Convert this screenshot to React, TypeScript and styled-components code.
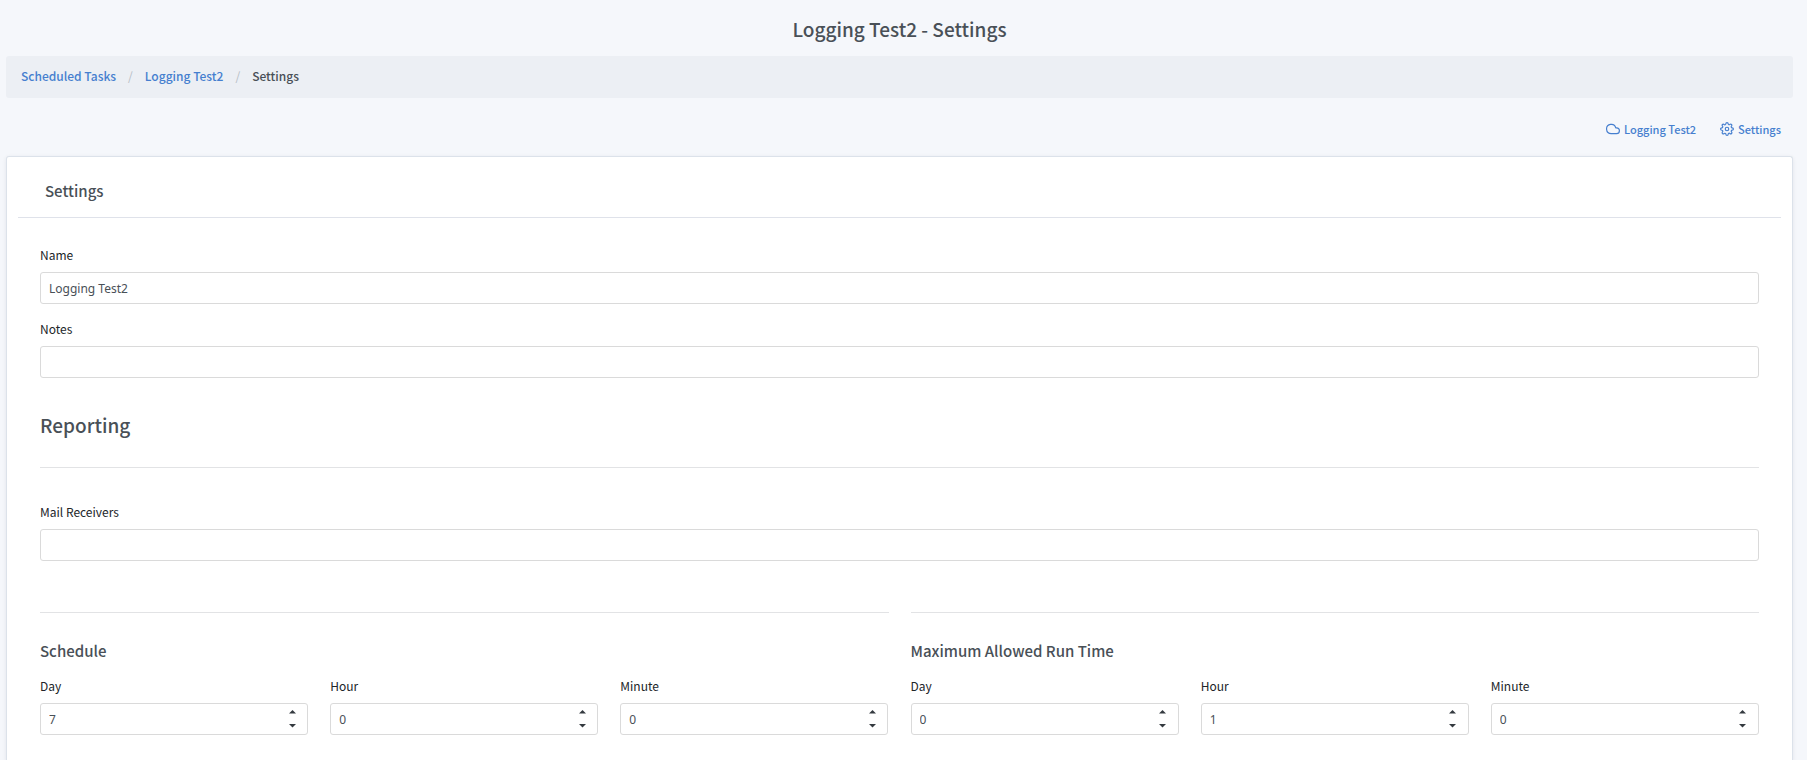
import React, { useState } from "react";
import styled, { createGlobalStyle } from "styled-components";
import { FiCloud, FiSettings } from "react-icons/fi";

const GlobalStyle = createGlobalStyle`
  * { box-sizing: border-box; }
  body {
    margin: 0;
    min-height: 100vh;
    background: #f5f7fb;
    color: #212529;
    font-family: "Noto Sans CJK SC", "Noto Sans", sans-serif;
    font-size: 12px;
    line-height: 20px;
  }
`;

const Page = styled.div`
  padding: 0 14px 0 6px;
`;

const PageTitle = styled.h1`
  margin: 0;
  padding: 15px 0 13px;
  color: #495057;
  font-size: 19px;
  font-weight: 500;
  line-height: 28px;
  text-align: center;
`;

const Breadcrumb = styled.ol`
  display: flex;
  margin: 0;
  padding: 10px 15px 12px;
  list-style: none;
  background: #eceff4;
  border-radius: 3px;
  font-weight: 500;
`;

const Crumb = styled.li`
  color: #495057;
  & + &::before {
    content: "/";
    padding: 0 12px;
    color: #b6bdc5;
    font-weight: 400;
  }
`;

const Link = styled.a`
  color: #467fcf;
  text-decoration: none;
`;

const Actions = styled.nav`
  display: flex;
  justify-content: flex-end;
  gap: 24px;
  padding: 21px 12px 17px 0;
`;

const ActionLink = styled(Link)`
  display: flex;
  align-items: center;
  gap: 4px;
  font-size: 11px;
  font-weight: 500;
`;

const Card = styled.section`
  min-height: calc(100vh - 156px);
  padding: 0 11px;
  background: #fff;
  border: 1px solid #dce2ea;
  border-bottom: 0;
  border-radius: 3px 3px 0 0;
  box-shadow: 0 1px 4px rgba(0, 20, 50, 0.08);
`;

const CardHeader = styled.header`
  padding: 24px 27px 16px;
  border-bottom: 1px solid #dfe2ea;
`;

const CardTitle = styled.h2`
  margin: 0;
  color: #495057;
  font-size: 15px;
  font-weight: 500;
  line-height: 20px;
`;

const Form = styled.form`
  display: flex;
  flex-direction: column;
  gap: 15px;
  padding: 27px 22px;
`;

const Field = styled.div`
  display: flex;
  flex-direction: column;
  gap: 7px;
`;

const Label = styled.label`
  color: #212529;
  font-size: 12px;
  font-weight: 400;
  line-height: 20px;
`;

const TextInput = styled.input`
  width: 100%;
  height: 32px;
  padding: 0 8px;
  background: #fff;
  color: #495057;
  border: 1px solid #dadada;
  border-radius: 3px;
  font-family: "Noto Sans", sans-serif;
  font-size: 12px;
`;

const Section = styled.div`
  padding-bottom: 36px;
`;

const SectionTitle = styled.h2`
  margin: 0 0 34px;
  padding: 18px 0 28px;
  border-bottom: 1px solid #e2e3e5;
  color: #495057;
  font-size: 19px;
  font-weight: 500;
  line-height: 28px;
`;

const Columns = styled.div`
  display: grid;
  grid-template-columns: 1fr 1fr;
  gap: 22px;
`;

const Group = styled.fieldset`
  min-width: 0;
  margin: 0;
  padding: 0;
  border: 0;
  border-top: 1px solid #e2e3e5;
`;

const GroupTitle = styled.h3`
  margin: 28px 0 15px;
  color: #495057;
  font-size: 15px;
  font-weight: 500;
  line-height: 20px;
`;

const Trio = styled.div`
  display: grid;
  grid-template-columns: repeat(3, 1fr);
  gap: 22px;
`;

const NumberBox = styled.div`
  display: flex;
  height: 32px;
  padding: 0 10px 0 8px;
  background: #fff;
  border: 1px solid #dadada;
  border-radius: 3px;
`;

const NumberInput = styled.input`
  flex: 1;
  min-width: 0;
  padding: 0;
  border: 0;
  outline: 0;
  background: none;
  color: #495057;
  font-family: "Noto Sans", sans-serif;
  font-size: 12px;
  appearance: textfield;
  &::-webkit-inner-spin-button { appearance: none; margin: 0; }
`;

const Steps = styled.div`
  display: flex;
  flex-direction: column;
  justify-content: center;
`;

const StepButton = styled.button`
  display: flex;
  align-items: center;
  justify-content: center;
  width: 10px;
  height: 14px;
  padding: 0;
  border: 0;
  background: none;
  color: #343a40;
`;

function NumberField({ id, label, initial }: { id: string; label: string; initial: number }) {
  const [value, setValue] = useState(initial);
  return (
    <Field>
      <Label htmlFor={id}>{label}</Label>
      <NumberBox>
        <NumberInput
          id={id}
          type="number"
          min={0}
          value={value}
          onChange={(e) => setValue(Number(e.target.value))}
        />
        <Steps>
          <StepButton type="button" aria-label={`Increase ${label}`} onClick={() => setValue(value + 1)}>
            <svg width="7" height="4" viewBox="0 0 7 4" fill="currentColor"><path d="M0 3.5 3.5 0 7 3.5z" /></svg>
          </StepButton>
          <StepButton type="button" aria-label={`Decrease ${label}`} onClick={() => setValue(Math.max(0, value - 1))}>
            <svg width="7" height="4" viewBox="0 0 7 4" fill="currentColor"><path d="M0 0 3.5 3.5 7 0z" /></svg>
          </StepButton>
        </Steps>
      </NumberBox>
    </Field>
  );
}

function DurationGroup({ id, title, values }: { id: string; title: string; values: number[] }) {
  return (
    <Group aria-labelledby={`${id}-title`}>
      <GroupTitle id={`${id}-title`}>{title}</GroupTitle>
      <Trio>
        {["Day", "Hour", "Minute"].map((unit, i) => (
          <NumberField key={unit} id={`${id}-${unit}`} label={unit} initial={values[i]} />
        ))}
      </Trio>
    </Group>
  );
}

export default function App() {
  return (
    <>
      <GlobalStyle />
      <Page>
        <PageTitle>Logging Test2 - Settings</PageTitle>
        <Breadcrumb>
          <Crumb><Link href="#tasks">Scheduled Tasks</Link></Crumb>
          <Crumb><Link href="#task">Logging Test2</Link></Crumb>
          <Crumb aria-current="page">Settings</Crumb>
        </Breadcrumb>
        <Actions>
          <ActionLink href="#task"><FiCloud size={14} />Logging Test2</ActionLink>
          <ActionLink href="#settings"><FiSettings size={14} />Settings</ActionLink>
        </Actions>
        <Card>
          <CardHeader><CardTitle>Settings</CardTitle></CardHeader>
          <Form>
            <Field>
              <Label htmlFor="name">Name</Label>
              <TextInput id="name" type="text" defaultValue="Logging Test2" />
            </Field>
            <Field>
              <Label htmlFor="notes">Notes</Label>
              <TextInput id="notes" type="text" />
            </Field>
            <Section>
              <SectionTitle>Reporting</SectionTitle>
              <Field>
                <Label htmlFor="mail">Mail Receivers</Label>
                <TextInput id="mail" type="text" />
              </Field>
            </Section>
            <Columns>
              <DurationGroup id="schedule" title="Schedule" values={[7, 0, 0]} />
              <DurationGroup id="runtime" title="Maximum Allowed Run Time" values={[0, 1, 0]} />
            </Columns>
          </Form>
        </Card>
      </Page>
    </>
  );
}
